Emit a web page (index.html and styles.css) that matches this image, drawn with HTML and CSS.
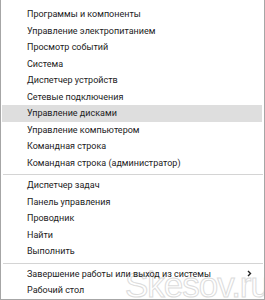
FILE: index.html
```html
<!DOCTYPE html>
<html lang="ru">
<head>
    <meta charset="UTF-8">
    <title>Меню Win+X</title>
    <link rel="stylesheet" href="styles.css">
</head>
<body>
    <div class="menu">
        <div class="menu-item">Программы и компоненты</div>
        <div class="menu-item">Управление электропитанием</div>
        <div class="menu-item">Просмотр событий</div>
        <div class="menu-item">Система</div>
        <div class="menu-item">Диспетчер устройств</div>
        <div class="menu-item">Сетевые подключения</div>
        <div class="menu-item active">Управление дисками</div>
        <div class="menu-item">Управление компьютером</div>
        <div class="menu-item">Командная строка</div>
        <div class="menu-item">Командная строка (администратор)</div>
        <div class="menu-sep"></div>
        <div class="menu-item">Диспетчер задач</div>
        <div class="menu-item">Панель управления</div>
        <div class="menu-item">Проводник</div>
        <div class="menu-item">Найти</div>
        <div class="menu-item">Выполнить</div>
        <div class="menu-sep"></div>
        <div class="menu-item has-sub">
            <span>Завершение работы или выход из системы</span>
            <svg class="sub-arrow" width="5" height="7" viewBox="0 0 5 7"><path d="M1 1 L3.5 3.5 L1 6" fill="none" stroke="#222" stroke-width="1.4"/></svg>
        </div>
        <div class="menu-item">Рабочий стол</div>
        <div class="watermark">Skesov.ru</div>
    </div>
</body>
</html>
```

FILE: styles.css
```css
html, body {
    margin: 0;
    padding: 0;
    background: #ffffff;
}
body {
    font-family: Roboto, 'Noto Sans', sans-serif;
    font-size: 9px;
    color: #1c1c1c;
}
.menu {
    position: relative;
    width: 263px;
    height: 293px;
    padding-top: 6px;
    border-left: 1px solid #a6a6a6;
    border-right: 1px solid #a6a6a6;
    border-bottom: 1px solid #a6a6a6;
    background: #ffffff;
    overflow: hidden;
}
.menu-item {
    position: relative;
    z-index: 1;
    height: 16.5px;
    line-height: 16.5px;
    padding-left: 25px;
    margin: 0 2px 0 1px;
    white-space: nowrap;
    display: flex;
    align-items: center;
    justify-content: space-between;
}
.menu-item.active {
    background: #dedede;
}
.has-sub {
    padding-right: 10px;
}
.sub-arrow {
    display: block;
}
.menu-sep {
    height: 1px;
    background: #d4d4d4;
    margin: 3px 1px 2px 2px;
}
.watermark {
    position: absolute;
    right: -5px;
    bottom: -1px;
    z-index: 0;
    font-family: 'Liberation Sans', sans-serif;
    font-size: 35px;
    line-height: 30px;
    color: transparent;
    -webkit-text-stroke: 1px #dcdcdc;
    letter-spacing: -1px;
}
```
